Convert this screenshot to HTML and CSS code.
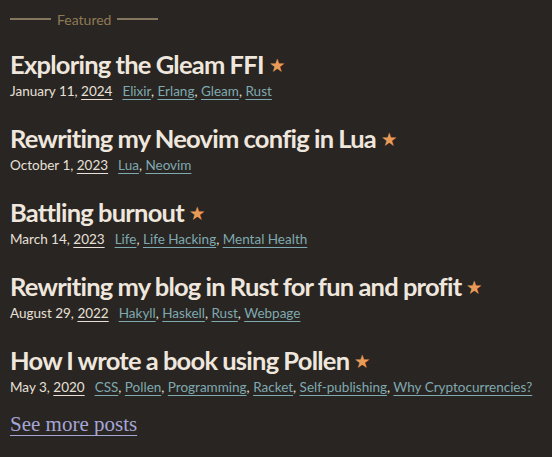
FILE: index.html
```html
<!DOCTYPE html>
<html lang="en">
<head>
<meta charset="utf-8">
<link rel="stylesheet" href="styles.css">
</head>
<body>
<main class="page">
  <div class="featured-head"><span class="rule"></span><span class="featured-label">Featured</span><span class="rule"></span></div>
  <ul class="posts">
    <li class="post">
      <h2 class="title"><a href="#">Exploring the Gleam FFI</a> <span class="star">★</span></h2>
      <div class="meta"><span class="date">January 11, <a href="#" class="year">2024</a></span><span class="tags"><a href="#">Elixir</a>, <a href="#">Erlang</a>, <a href="#">Gleam</a>, <a href="#">Rust</a></span></div>
    </li>
    <li class="post">
      <h2 class="title"><a href="#">Rewriting my Neovim config in Lua</a> <span class="star">★</span></h2>
      <div class="meta"><span class="date">October 1, <a href="#" class="year">2023</a></span><span class="tags"><a href="#">Lua</a>, <a href="#">Neovim</a></span></div>
    </li>
    <li class="post">
      <h2 class="title"><a href="#">Battling burnout</a> <span class="star">★</span></h2>
      <div class="meta"><span class="date">March 14, <a href="#" class="year">2023</a></span><span class="tags"><a href="#">Life</a>, <a href="#">Life Hacking</a>, <a href="#">Mental Health</a></span></div>
    </li>
    <li class="post">
      <h2 class="title"><a href="#">Rewriting my blog in Rust for fun and profit</a> <span class="star">★</span></h2>
      <div class="meta"><span class="date">August 29, <a href="#" class="year">2022</a></span><span class="tags"><a href="#">Hakyll</a>, <a href="#">Haskell</a>, <a href="#">Rust</a>, <a href="#">Webpage</a></span></div>
    </li>
    <li class="post">
      <h2 class="title"><a href="#">How I wrote a book using Pollen</a> <span class="star">★</span></h2>
      <div class="meta"><span class="date">May 3, <a href="#" class="year">2020</a></span><span class="tags"><a href="#">CSS</a>, <a href="#">Pollen</a>, <a href="#">Programming</a>, <a href="#">Racket</a>, <a href="#">Self-publishing</a>, <a href="#">Why Cryptocurrencies?</a></span></div>
    </li>
  </ul>
  <a href="#" class="more">See more posts</a>
</main>
</body>
</html>
```
FILE: styles.css
```css
html, body {
  margin: 0;
  padding: 0;
  background: #292522;
}
.page {
  padding: 8px 10px 0 10px;
  font-family: Lato, "Noto Sans", sans-serif;
  color: #ece3da;
}
.featured-head {
  display: flex;
  align-items: center;
  gap: 6px;
  height: 22px;
}
.rule {
  width: 41px;
  height: 2px;
  background: #857660;
}
.featured-label {
  color: #8e7a55;
  font-size: 14px;
}
.posts {
  list-style: none;
  margin: 0;
  padding: 0;
}
.post {
  margin-top: 19px;
}
.post + .post {
  margin-top: 21px;
}
.title {
  margin: 0;
  font-size: 25.5px;
  font-weight: 700;
  line-height: 30px;
  letter-spacing: -0.75px;
  word-spacing: -0.5px;
}
.title a {
  color: #efe7de;
  text-decoration: none;
}
.star {
  color: #e89a56;
  font-size: 16px;
  margin-left: 1px;
  vertical-align: 3px;
}
.meta {
  font-size: 13.5px;
  line-height: 22px;
  white-space: nowrap;
}
.date {
  color: #e8e0d8;
  margin-right: 10px;
}
.year {
  color: #e8e0d8;
  text-decoration: underline;
  text-underline-offset: 3px;
}
.tags {
  color: #e8e0d8;
}
.tags a {
  color: #7fa9b0;
  text-decoration: underline;
  text-underline-offset: 3px;
}
.more {
  display: inline-block;
  margin-top: 14px;
  font-family: "Liberation Serif", serif;
  font-size: 21px;
  line-height: 24px;
  color: #a4a6d6;
  text-decoration: underline;
  text-underline-offset: 4px;
}
```
